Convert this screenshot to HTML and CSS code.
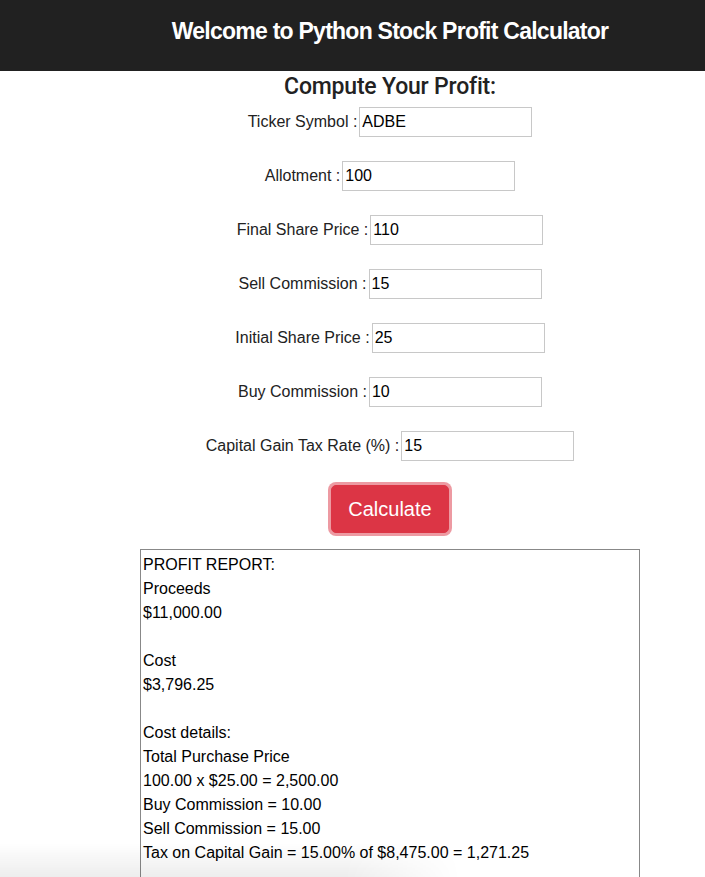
FILE: index.html
```html
<!DOCTYPE html>
<html>
<head>
<meta charset="utf-8">
<link rel="stylesheet" href="styles.css">
</head>
<body>
<div class="page">
  <header class="topbar">
    <h1 class="title">Welcome to Python Stock Profit Calculator</h1>
  </header>
  <main class="content">
    <h2 class="subtitle">Compute Your Profit:</h2>
    <form class="form">
      <div class="row"><label>Ticker Symbol :</label><input class="field" type="text" value="ADBE"></div>
      <div class="row"><label>Allotment :</label><input class="field" type="text" value="100"></div>
      <div class="row"><label>Final Share Price :</label><input class="field" type="text" value="110"></div>
      <div class="row"><label>Sell Commission :</label><input class="field" type="text" value="15"></div>
      <div class="row"><label>Initial Share Price :</label><input class="field" type="text" value="25"></div>
      <div class="row"><label>Buy Commission :</label><input class="field" type="text" value="10"></div>
      <div class="row"><label>Capital Gain Tax Rate (%) :</label><input class="field" type="text" value="15"></div>
      <div class="btnrow"><button type="button" class="btn">Calculate</button></div>
    </form>
    <div class="report">PROFIT REPORT:
Proceeds
$11,000.00

Cost
$3,796.25

Cost details:
Total Purchase Price
100.00 x $25.00 = 2,500.00
Buy Commission = 10.00
Sell Commission = 15.00
Tax on Capital Gain = 15.00% of $8,475.00 = 1,271.25</div>
  </main>
  <div class="shade"></div>
</div>
</body>
</html>
```
FILE: styles.css
```css
html, body {
  margin: 0;
  padding: 0;
  overflow: hidden;
  background: #fff;
}
body {
  font-family: "Liberation Sans", Arial, sans-serif;
  color: #212529;
}
.page {
  height: 877px;
  overflow: hidden;
}
.topbar {
  background: #212121;
  height: 71px;
  padding-left: 75px;
  display: flex;
  align-items: center;
  justify-content: center;
}
.title {
  margin: 0;
  padding-bottom: 8px;
  color: #fff;
  font-size: 23px;
  font-weight: 700;
  letter-spacing: -0.75px;
}
.content {
  padding-left: 75px;
  display: flex;
  flex-direction: column;
  align-items: center;
}
.subtitle {
  margin: 2px 0 0;
  font-family: Roboto, "Liberation Sans", sans-serif;
  font-size: 23px;
  font-weight: 500;
  line-height: 28px;
  letter-spacing: -0.2px;
  color: #222;
}
.form {
  display: flex;
  flex-direction: column;
  align-items: center;
  gap: 24px;
  margin-top: 6px;
}
.row {
  display: flex;
  align-items: center;
  font-size: 16px;
  color: #222;
}
.row label {
  margin-right: 2px;
}
.field {
  width: 173px;
  height: 30px;
  box-sizing: border-box;
  border: 1px solid #c8c8c8;
  padding: 0 2px;
  font-family: "Liberation Sans", Arial, sans-serif;
  font-size: 16px;
  color: #000;
  outline: none;
}
.btn {
  background: #dc3545;
  color: #fff;
  border: 1px solid #dc3545;
  border-radius: 5px;
  font-family: "Liberation Sans", Arial, sans-serif;
  font-size: 20px;
  line-height: 30px;
  padding: 8px 16px;
  box-shadow: 0 0 0 3px rgba(220, 53, 69, 0.5);
}
.report {
  box-sizing: border-box;
  width: 500px;
  height: 360px;
  margin-top: 16px;
  border: 1px solid #888;
  padding: 3px 2px;
  white-space: pre;
  font-size: 16px;
  line-height: 24px;
  color: #000;
}
.shade {
  position: fixed;
  left: 0;
  bottom: 0;
  width: 460px;
  height: 34px;
  pointer-events: none;
  background: linear-gradient(to bottom, rgba(0, 0, 0, 0), rgba(0, 0, 0, 0.07));
  -webkit-mask-image: linear-gradient(to right, #000 75%, transparent);
  mask-image: linear-gradient(to right, #000 75%, transparent);
}
```
